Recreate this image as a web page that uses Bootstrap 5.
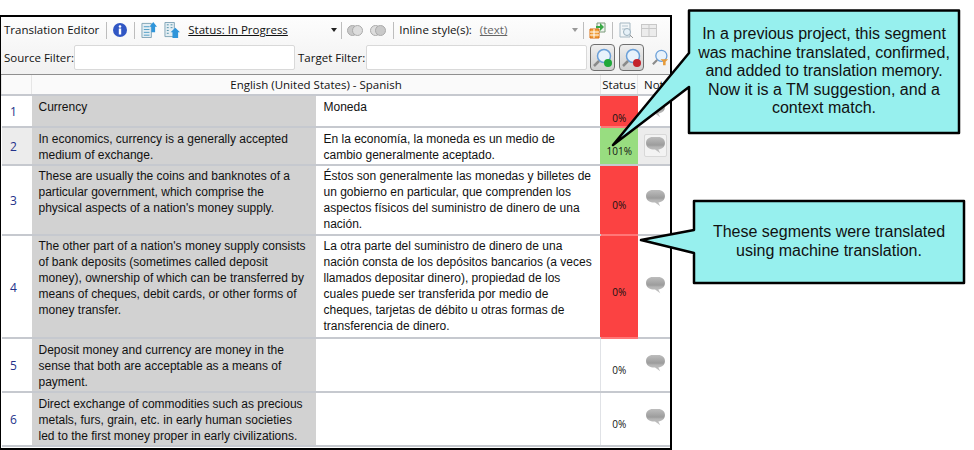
<!DOCTYPE html>
<html lang="en">
<head>
  <meta charset="UTF-8" />
  <meta name="viewport" content="width=device-width, initial-scale=1.0" />
  <title>Translation Editor</title>
  <link href="https://cdn.jsdelivr.net/npm/bootstrap@5.3.0/dist/css/bootstrap.min.css" rel="stylesheet">
  <style>
    body {
      background: #fff;
      height: 450px;
      overflow: hidden;
      position: relative;
      font-family: "Liberation Sans", Arial, sans-serif;
    }

    .editor-window {
      margin-top: 15px;
      width: 672px;
      height: 435px;
      border: 2px solid #000;
      border-width: 2px 2px 2px 1px;
      overflow: hidden;
      background: #fff;
    }

    .tool-area {
      height: 58px;
      background: linear-gradient(to bottom, #fdfdfd, #f1f1f1);
      border-bottom: 1px solid #8f8f8f;
      font-family: "Open Sans", sans-serif;
      font-size: 11.5px;
      color: #111;
      white-space: nowrap;
    }

    .tool-row-top { height: 26px; padding-left: 3px; }
    .tool-row-bottom { height: 29px; padding-left: 3px; }
    .sep { width: 1px; height: 17px; background: #bdbdbd; flex: none; }
    .tb-g3 { margin-left: 3px; }
    .tb-g4 { margin-left: 4px; }
    .tb-g5 { margin-left: 5px; }
    .tb-g6 { margin-left: 6px; }
    .tb-g7 { margin-left: 7px; }
    .tb-g8 { margin-left: 8px; }
    .status-label { width: 143px; }
    .style-label { width: 92px; color: #666; }
    .source-label { width: 70px; }
    .target-label { width: 68px; }
    .drop-arrow { width: 0; height: 0; border: 3px solid transparent; border-top: 4px solid #222; border-bottom: 0; }
    .drop-arrow.muted-arrow { border-top-color: #999; }
    .filter-box { width: 221px; height: 25px; background: #fff; border: 1px solid #d9d9d9; border-radius: 2px; }
    .search-btn {
      width: 25px; height: 27px;
      border: 1px solid #6f6f6f; border-radius: 4px;
      background: linear-gradient(to bottom, #efefef, #cfcfcf);
      display: flex; align-items: center; justify-content: center;
    }

    .seg-table {
      table-layout: fixed;
      width: 670px;
      margin: 0;
      font-size: 12px;
      line-height: 16px;
      color: #111;
    }
    .seg-table > :not(caption) > * > * {
      padding: 0;
      border-width: 0 0 2px 0;
      border-color: #c6c9cf;
      box-shadow: none;
      background: transparent;
      vertical-align: top;
    }
    .seg-table th {
      height: 20px;
      font-family: "Open Sans", sans-serif;
      font-size: 11.5px;
      font-weight: 400;
      text-align: center;
      vertical-align: middle;
      background: #fafafa;
      border-left: 1px solid #e6e6e6 !important;
      white-space: nowrap;
      overflow: hidden;
    }
    .seg-table > thead > tr > th.notes-head { text-align: left; padding-left: 6px; }
    .seg-table > tbody > tr > td.num-cell {
      font-family: "Open Sans", sans-serif;
      color: #23328a;
      text-align: center;
      vertical-align: middle;
      padding: 2px 6px 0 0;
    }
    .seg-table > tbody > tr > td.src-cell {
      background: #d2d2d2;
      padding: 3px 6px 0 7px;
      border-right: 2px solid #fff;
    }
    .seg-table > tbody > tr > td.tgt-cell { padding: 3px 4px 0 6px; }
    .seg-table > tbody > tr.tall-row > td.src-cell,
    .seg-table > tbody > tr.tall-row > td.tgt-cell { padding-top: 2px; }
    .seg-table > tbody > tr > td.pct-cell {
      font-family: "Open Sans", sans-serif;
      font-size: 10px;
      color: #111;
      text-align: center;
      vertical-align: middle;
      padding-top: 10px;
      border-left: 1px solid #e0e2e6;
    }
    .seg-table > tbody > tr > td.pct-red { background: #fb4242; border-left-color: #fb4242; border-bottom-color: #f77; }
    .seg-table > tbody > tr > td.pct-green { background: #98dd80; border-left-color: #98dd80; border-bottom-color: #c6c9cf; }
    .seg-table > tbody > tr > td.note-cell { text-align: center; vertical-align: middle; padding: 0 0 4px 2px; }
    .seg-table > tbody > tr.current-row > td.note-cell { padding-bottom: 0; }
    .seg-table tr.current-row td.num-cell, .seg-table tr.current-row td.note-cell { background: #ececec; }
    .note-frame {
      display: inline-flex;
      align-items: center;
      justify-content: center;
      width: 23px;
      height: 23px;
      border: 1px solid #d8d8d8;
      border-radius: 2px;
      background: #f3f3f3;
    }

    .callout-art { position: absolute; left: 0; top: 0; pointer-events: none; }
    .callout-text {
      position: absolute;
      font-size: 16px;
      line-height: 18.5px;
      text-align: center;
      color: #111;
    }
    .callout-one { left: 689px; top: 25px; width: 270px; }
    .callout-two { left: 694px; top: 223px; width: 270px; }
  </style>
</head>
<body>
  <svg width="0" height="0" class="d-block position-absolute">
    <defs>
      <linearGradient id="noteFill" x1="0" y1="0" x2="0" y2="1">
        <stop offset="0" stop-color="#bdbdbd"/>
        <stop offset=".5" stop-color="#9c9c9c"/>
        <stop offset=".62" stop-color="#b4b4b4"/>
        <stop offset="1" stop-color="#c4c4c4"/>
      </linearGradient>
      <symbol id="noteIcon" viewBox="0 0 20 19">
        <path d="M7 1h6c4 0 7 2.500 7 6.500S17 14 13 14.200l2 4-5.500-4H7C3 14 0 11.500 0 7.500S3 1 7 1z" fill="url(#noteFill)"/>
      </symbol>
      <symbol id="docUp" viewBox="0 0 17 17">
        <path d="M1 1.500h10v15H1z" fill="#e4eef3" stroke="#7fa3b5"/>
        <path d="M3 5h6M3 8h6M3 11h6M3 14h6" stroke="#4d9cc4"/>
        <path d="M13 0l4 5h-2v6h-4V5H9z" fill="#2f95da"/>
      </symbol>
      <symbol id="docDown" viewBox="0 0 17 17">
        <path d="M1 .5h10v15H1z" fill="#e4eef3" stroke="#7fa3b5"/>
        <path d="M3 3h2M7 3h2M3 6h2M7 6h2M3 9h2M3 12h2" stroke="#4d8fa8"/>
        <path d="M12 6l5 5h-2v6h-6v-6H7z" fill="#2f95da"/>
      </symbol>
      <symbol id="lensIcon" viewBox="0 0 20 20">
        <circle cx="11" cy="8" r="6.500" fill="#e8f2fb" stroke="#6a9fd8" stroke-width="1.500"/>
        <path d="M6 13l-5 5" stroke="#8a8a8a" stroke-width="2.500"/>
      </symbol>
    </defs>
  </svg>

  <div class="editor-window">
    <div class="tool-area">
      <div class="tool-row-top d-flex align-items-center">
        <span>Translation Editor</span>
        <span class="sep tb-g7"></span>
        <svg class="tb-g6" width="14" height="14" viewBox="0 0 14 14"><circle cx="7" cy="7" r="7" fill="#3157c4"/><circle cx="7" cy="3.500" r="1.300" fill="#fff"/><rect x="5.800" y="5.500" width="2.400" height="6" fill="#fff"/></svg>
        <span class="sep tb-g7"></span>
        <svg class="tb-g6" width="16" height="16"><use href="#docUp"/></svg>
        <svg class="tb-g7" width="16" height="16"><use href="#docDown"/></svg>
        <span class="tb-g8 status-label text-decoration-underline">Status: In Progress</span>
        <span class="drop-arrow"></span>
        <span class="sep tb-g4"></span>
        <svg class="tb-g5" width="16" height="11" viewBox="0 0 16 11"><circle cx="5.500" cy="5.500" r="5" fill="#c9c9c9" stroke="#aaa"/><circle cx="10.500" cy="5.500" r="5" fill="#ddd" stroke="#aaa"/></svg>
        <svg class="tb-g7" width="16" height="11" viewBox="0 0 16 11"><circle cx="5.500" cy="5.500" r="5" fill="#ddd" stroke="#aaa"/><circle cx="10.500" cy="5.500" r="5" fill="#c9c9c9" stroke="#aaa"/></svg>
        <span class="sep tb-g7"></span>
        <span class="tb-g5">Inline style(s):</span>
        <span class="tb-g8 style-label text-decoration-underline">(text)</span>
        <span class="drop-arrow muted-arrow"></span>
        <span class="sep tb-g5"></span>
        <svg class="tb-g5" width="17" height="17" viewBox="0 0 17 17"><path d="M8 1h8v9H8z" fill="#eef3ee" stroke="#7a9a7a"/><path d="M1 7h9v9H1z" fill="#f2a23c" stroke="#d96f10"/><path d="M1 10h9M1 13h9M5 7v9" stroke="#fff"/><path d="M7 4h4V1l4 4-4 4V6H7z" fill="#39a845"/></svg>
        <span class="sep tb-g6"></span>
        <svg class="tb-g6" width="15" height="17" viewBox="0 0 15 17"><path d="M1 1h10v14H1z" fill="#f2f6f8" stroke="#a5b7c2"/><path d="M3 4h6M3 7h4" stroke="#b5c5cf"/><circle cx="8" cy="10" r="3.500" fill="#e6f1f8" stroke="#9bb0bd"/><path d="M11 13l3 3" stroke="#999"/></svg>
        <svg class="tb-g7" width="16" height="13" viewBox="0 0 16 13"><rect x=".5" y=".5" width="15" height="12" fill="#ececec" stroke="#c8c8c8"/><path d="M0 4.500h16M8 .5v12" stroke="#c8c8c8"/></svg>
      </div>
      <div class="tool-row-bottom d-flex align-items-center">
        <span class="source-label">Source Filter:</span>
        <span class="filter-box"></span>
        <span class="target-label tb-g3">Target Filter:</span>
        <span class="filter-box"></span>
        <span class="search-btn tb-g3"><svg width="20" height="20" viewBox="0 0 20 20"><use href="#lensIcon"/><circle cx="15" cy="15" r="4" fill="#1fa83a"/></svg></span>
        <span class="search-btn tb-g4"><svg width="20" height="20" viewBox="0 0 20 20"><use href="#lensIcon"/><circle cx="15" cy="15" r="4" fill="#c3222c"/></svg></span>
        <svg class="tb-g8" width="17" height="17" viewBox="0 0 20 20"><use href="#lensIcon"/><path d="M10 12h9l-3 3v4h-3v-4z" fill="#e59a3a"/></svg>
      </div>
    </div>

    <table class="table seg-table">
      <colgroup>
        <col style="width:30px"><col style="width:285px"><col style="width:284px"><col style="width:37px"><col style="width:34px">
      </colgroup>
      <thead>
        <tr>
          <th></th>
          <th colspan="2">English (United States) - Spanish</th>
          <th>Status</th>
          <th class="notes-head">Notes</th>
        </tr>
      </thead>
      <tbody>
        <tr style="height:32px">
          <td class="num-cell">1</td>
          <td class="src-cell">Currency</td>
          <td class="tgt-cell">Moneda</td>
          <td class="pct-cell pct-red align-bottom">0%</td>
          <td class="note-cell"><svg width="19" height="18"><use href="#noteIcon"/></svg></td>
        </tr>
        <tr class="current-row" style="height:38px">
          <td class="num-cell">2</td>
          <td class="src-cell">In economics, currency is a generally accepted medium of exchange.</td>
          <td class="tgt-cell">En la economía, la moneda es un medio de cambio generalmente aceptado.</td>
          <td class="pct-cell pct-green">101%</td>
          <td class="note-cell"><span class="note-frame"><svg width="19" height="18"><use href="#noteIcon"/></svg></span></td>
        </tr>
        <tr class="tall-row" style="height:70px">
          <td class="num-cell">3</td>
          <td class="src-cell">These are usually the coins and banknotes of a particular government, which comprise the physical aspects of a nation's money supply.</td>
          <td class="tgt-cell">Éstos son generalmente las monedas y billetes de un gobierno en particular, que comprenden los aspectos físicos del suministro de dinero de una nación.</td>
          <td class="pct-cell pct-red">0%</td>
          <td class="note-cell"><svg width="19" height="18"><use href="#noteIcon"/></svg></td>
        </tr>
        <tr class="tall-row" style="height:103px">
          <td class="num-cell">4</td>
          <td class="src-cell">The other part of a nation's money supply consists of bank deposits (sometimes called deposit money), ownership of which can be transferred by means of cheques, debit cards, or other forms of money transfer.</td>
          <td class="tgt-cell">La otra parte del suministro de dinero de una nación consta de los depósitos bancarios (a veces llamados depositar dinero), propiedad de los cuales puede ser transferida por medio de cheques, tarjetas de débito u otras formas de transferencia de dinero.</td>
          <td class="pct-cell pct-red">0%</td>
          <td class="note-cell"><svg width="19" height="18"><use href="#noteIcon"/></svg></td>
        </tr>
        <tr style="height:54px">
          <td class="num-cell">5</td>
          <td class="src-cell">Deposit money and currency are money in the sense that both are acceptable as a means of payment.</td>
          <td class="tgt-cell"></td>
          <td class="pct-cell">0%</td>
          <td class="note-cell"><svg width="19" height="18"><use href="#noteIcon"/></svg></td>
        </tr>
        <tr style="height:54px">
          <td class="num-cell">6</td>
          <td class="src-cell">Direct exchange of commodities such as precious metals, furs, grain, etc. in early human societies led to the first money proper in early civilizations.</td>
          <td class="tgt-cell"></td>
          <td class="pct-cell">0%</td>
          <td class="note-cell"><svg width="19" height="18"><use href="#noteIcon"/></svg></td>
        </tr>
      </tbody>
    </table>
  </div>

  <!-- callouts sit over the editor -->
  <svg class="callout-art" width="974" height="450">
    <path d="M689 10.500H959V133H689V87L613 145L689 53z" fill="#97f0ee" stroke="#000" stroke-width="2.500" stroke-linejoin="round"/>
    <path d="M694 201H964V283H694V253L641 240L694 230z" fill="#97f0ee" stroke="#000" stroke-width="2.500" stroke-linejoin="round"/>
  </svg>
  <div class="callout-text callout-one">In a previous project, this segment<br>was machine translated, confirmed,<br>and added to translation memory.<br>Now it is a TM suggestion, and a<br>context match.</div>
  <div class="callout-text callout-two">These segments were translated<br>using machine translation.</div>

  <script src="https://cdn.jsdelivr.net/npm/bootstrap@5.3.0/dist/js/bootstrap.bundle.min.js"></script>
</body>
</html>
